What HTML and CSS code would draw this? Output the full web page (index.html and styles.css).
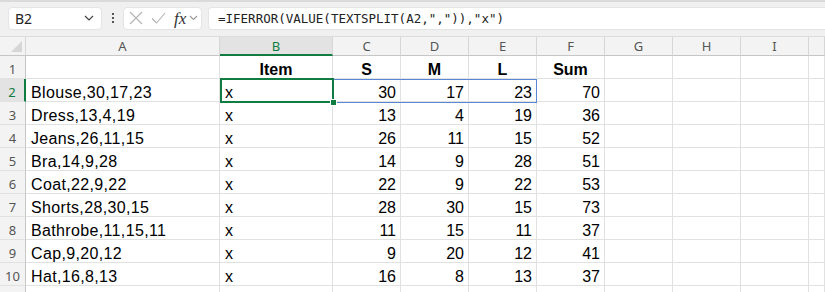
FILE: index.html
```html
<!DOCTYPE html>
<html lang="en">
<head>
	<meta charset="UTF-8">
	<title>Sheet</title>
	<link rel="stylesheet" href="styles.css">
</head>
<body>
    <div class="bar">
        <div class="namebox">
            <span>B2</span>
            <svg width="10" height="6" viewBox="0 0 10 6"><path d="M1 1l4 4 4-4" fill="none" stroke="#444" stroke-width="1.2"/></svg>
        </div>
        <div class="dots"><i></i><i></i><i></i></div>
        <div class="fxbox">
            <svg width="14" height="14" viewBox="0 0 14 14"><path d="M1 1l12 12M13 1L1 13" stroke="#b4b4b4" stroke-width="1.1"/></svg>
            <svg width="15" height="12" viewBox="0 0 15 12"><path d="M1 6.5l4.5 4.5L14 1" fill="none" stroke="#b4b4b4" stroke-width="1.1"/></svg>
            <span class="fx">fx</span>
            <svg width="9" height="6" viewBox="0 0 9 6"><path d="M1 1l3.5 3.5L8 1" fill="none" stroke="#9a9a9a" stroke-width="1.1"/></svg>
        </div>
        <div class="formula">=IFERROR(VALUE(TEXTSPLIT(A2,",")),"x")</div>
    </div>

    <div class="sheet">
        <div class="row head">
            <div class="corner"><b></b></div>
            <div>A</div><div class="on">B</div><div>C</div><div>D</div><div>E</div><div>F</div><div>G</div><div>H</div><div>I</div><div></div>
        </div>
        <div class="row">
            <div class="rh">1</div>
            <div></div><div class="th">Item</div><div class="th">S</div><div class="th">M</div><div class="th">L</div><div class="th">Sum</div><div></div><div></div><div></div><div></div>
        </div>
        <div class="row">
            <div class="rh on">2</div>
            <div class="t">Blouse,30,17,23</div><div>x</div><div class="n">30</div><div class="n">17</div><div class="n">23</div><div class="n">70</div><div></div><div></div><div></div><div></div>
        </div>
        <div class="row">
            <div class="rh">3</div>
            <div class="t">Dress,13,4,19</div><div>x</div><div class="n">13</div><div class="n">4</div><div class="n">19</div><div class="n">36</div><div></div><div></div><div></div><div></div>
        </div>
        <div class="row">
            <div class="rh">4</div>
            <div class="t">Jeans,26,11,15</div><div>x</div><div class="n">26</div><div class="n">11</div><div class="n">15</div><div class="n">52</div><div></div><div></div><div></div><div></div>
        </div>
        <div class="row">
            <div class="rh">5</div>
            <div class="t">Bra,14,9,28</div><div>x</div><div class="n">14</div><div class="n">9</div><div class="n">28</div><div class="n">51</div><div></div><div></div><div></div><div></div>
        </div>
        <div class="row">
            <div class="rh">6</div>
            <div class="t">Coat,22,9,22</div><div>x</div><div class="n">22</div><div class="n">9</div><div class="n">22</div><div class="n">53</div><div></div><div></div><div></div><div></div>
        </div>
        <div class="row">
            <div class="rh">7</div>
            <div class="t">Shorts,28,30,15</div><div>x</div><div class="n">28</div><div class="n">30</div><div class="n">15</div><div class="n">73</div><div></div><div></div><div></div><div></div>
        </div>
        <div class="row">
            <div class="rh">8</div>
            <div class="t">Bathrobe,11,15,11</div><div>x</div><div class="n">11</div><div class="n">15</div><div class="n">11</div><div class="n">37</div><div></div><div></div><div></div><div></div>
        </div>
        <div class="row">
            <div class="rh">9</div>
            <div class="t">Cap,9,20,12</div><div>x</div><div class="n">9</div><div class="n">20</div><div class="n">12</div><div class="n">41</div><div></div><div></div><div></div><div></div>
        </div>
        <div class="row">
            <div class="rh">10</div>
            <div class="t">Hat,16,8,13</div><div>x</div><div class="n">16</div><div class="n">8</div><div class="n">13</div><div class="n">37</div><div></div><div></div><div></div><div></div>
        </div>
        <div class="row">
            <div class="rh"></div>
            <div></div><div></div><div></div><div></div><div></div><div></div><div></div><div></div><div></div><div></div>
        </div>

        <!-- spill range + active cell -->
        <div class="spill"></div>
        <div class="sel"><span class="handle"></span></div>
    </div>
</body>
</html>
```

FILE: styles.css
```css
*{
    margin: 0;
    padding: 0;
    box-sizing: border-box;
}
html,body{height:100%;}
body{
    background: #fff;
    overflow: hidden;
    font-family: "Liberation Sans", Arial, sans-serif;
}

/* formula bar */
.bar{
    height: 37px;
    background: #f0f0f0;
    border-top: 2px solid #dadada;
    display: flex;
    align-items: center;
    padding: 0 0 2px 8px;
    border-bottom: 1px solid #dcdcdc;
}
.namebox{
    width: 94px;
    height: 23px;
    background: #fff;
    border-radius: 4px;
    border: 1px solid #e4e4e4;
    display: flex;
    align-items: center;
    justify-content: space-between;
    padding: 0 7px 0 6px;
    font-family: "Noto Sans", sans-serif;
    font-size: 14px;
    color: #222;
}
.dots{
    width: 21px;
    display: flex;
    flex-direction: column;
    align-items: center;
    gap: 2px;
}
.dots i{
    display: block;
    width: 2px;
    height: 2px;
    background: #555;
}
.fxbox{
    width: 79px;
    height: 23px;
    background: #fff;
    border-radius: 4px;
    border: 1px solid #e4e4e4;
    display: flex;
    align-items: center;
    padding: 0 2px 0 5px;
}
.fxbox svg:nth-child(1){margin-right:8px;}
.fxbox svg:nth-child(2){margin-right:8px;}
.fx{
    font-family: "Liberation Serif", serif;
    font-style: italic;
    font-size: 17px;
    color: #333;
    margin-right: 3px;
    line-height: 1;
}
.formula{
    flex: 1;
    height: 23px;
    margin-left: 6px;
    background: #fff;
    border-radius: 4px 0 0 4px;
    border: 1px solid #e4e4e4;
    border-right: 0;
    font-family: "DejaVu Sans Mono", monospace;
    font-size: 12.5px;
    line-height: 21px;
    padding-left: 9px;
    color: #222;
}

/* grid */
.sheet{
    position: relative;
}
.row{
    display: grid;
    grid-template-columns: 26px 194px 113px repeat(7, 68px) 1fr;
    height: 23px;
}
.row > div{
    border-right: 1px solid #e1e1e1;
    border-bottom: 1px solid #e1e1e1;
    font-size: 16px;
    line-height: 23px;
    padding: 2px 5px 0;
    color: #000;
    white-space: nowrap;
    overflow: hidden;
}
.row .t{
    letter-spacing: 0.35px;
}
.row .n{
    text-align: right;
    padding-right: 4px;
}
.row .th{
    text-align: center;
    font-weight: bold;
}
.head{
    height: 19px;
    background: #f3f3f3;
}
.head > div{
    background: #f3f3f3;
    border-right: 1px solid #d6d6d6;
    border-bottom: 1px solid #c6c6c6;
    font-family: "Noto Sans", sans-serif;
    font-size: 13px;
    line-height: 17px;
    padding: 1px 0 0;
    text-align: center;
    color: #555;
}
.head > .on{
    background: #e3e3e3;
    color: #107c41;
    border-bottom: 2px solid #107c41;
}
.corner{
    position: relative;
}
.corner b{
    position: absolute;
    right: 3px;
    bottom: 3px;
    width: 0;
    height: 0;
    border-left: 11px solid transparent;
    border-bottom: 11px solid #d6d6d6;
}
.row > .rh{
    background: #f3f3f3;
    border-right: 1px solid #c6c6c6;
    font-family: "Noto Sans", sans-serif;
    font-size: 13px;
    text-align: center;
    padding: 2px 0 0;
    color: #555;
}
.row > .rh.on{
    background: #e3e3e3;
    color: #107c41;
    border-right: 2px solid #107c41;
}

/* overlays */
.spill{
    position: absolute;
    left: 220px;
    top: 42px;
    width: 317px;
    height: 24px;
    border: 1px solid #5b86d6;
}
.sel{
    position: absolute;
    left: 220px;
    top: 41px;
    width: 114px;
    height: 25px;
    border: 2px solid #107c41;
}
.handle{
    position: absolute;
    right: -5px;
    bottom: -5px;
    width: 7px;
    height: 7px;
    background: #107c41;
    border: 1px solid #fff;
}
```
